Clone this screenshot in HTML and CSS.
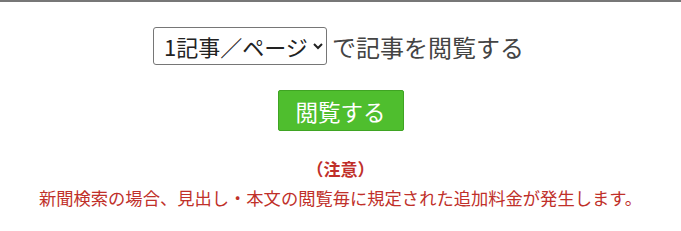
FILE: index.html
```html
<!DOCTYPE html>
<html lang="ja">
<head>
    <meta charset="UTF-8">
    <meta name="viewport" content="width=device-width, initial-scale=1.0">
    <title>閲覧設定</title>
    <link rel="stylesheet" href="styles.css">
</head>
<body>
    <!-- 閲覧件数の選択 -->
    <div class="view-form">
        <div class="select-row">
            <select class="per-page">
                <option>1記事／ページ</option>
                <option>5記事／ページ</option>
                <option>10記事／ページ</option>
            </select>
            <span class="select-label">で記事を閲覧する</span>
        </div>

        <div class="button-row">
            <button class="view-button">閲覧する</button>
        </div>

        <div class="notice">
            <p class="notice-title">（注意）</p>
            <p class="notice-text">新聞検索の場合、見出し・本文の閲覧毎に規定された追加料金が発生します。</p>
        </div>
    </div>
</body>
</html>
```

FILE: styles.css
```css
/* 全体 */
body {
    font-family: 'Noto Sans CJK JP', 'Noto Sans', sans-serif;
    margin: 0;
    padding: 0;
    background-color: #fff;
    color: #333;
    border-top: 2px solid #777;
}

.view-form {
    text-align: center;
    padding-top: 25px;
}

.select-row {
    display: flex;
    justify-content: center;
    align-items: center;
    gap: 5px;
    margin-right: 4px;
}

.per-page {
    font-family: inherit;
    font-size: 22px;
    color: #222;
    height: 38px;
    width: 174px;
    padding: 0 0 0 6px;
    border: 1px solid #767676;
    border-radius: 3px;
    background-color: #fff;
}

.select-label {
    font-size: 24px;
    color: #444;
}

.button-row {
    margin-top: 25px;
}

.view-button {
    font-family: inherit;
    font-size: 22.5px;
    color: #fff;
    background-color: #4fbe2e;
    border: 1px solid #3fa423;
    border-radius: 2px;
    width: 126px;
    height: 41px;
    cursor: pointer;
}

.notice {
    margin-top: 24px;
    color: #c0302a;
}

.notice p {
    margin: 0;
}

.notice-title {
    font-size: 17px;
    font-weight: bold;
    line-height: 27px;
}

.notice-text {
    font-size: 17.3px;
    line-height: 32px;
}
```
